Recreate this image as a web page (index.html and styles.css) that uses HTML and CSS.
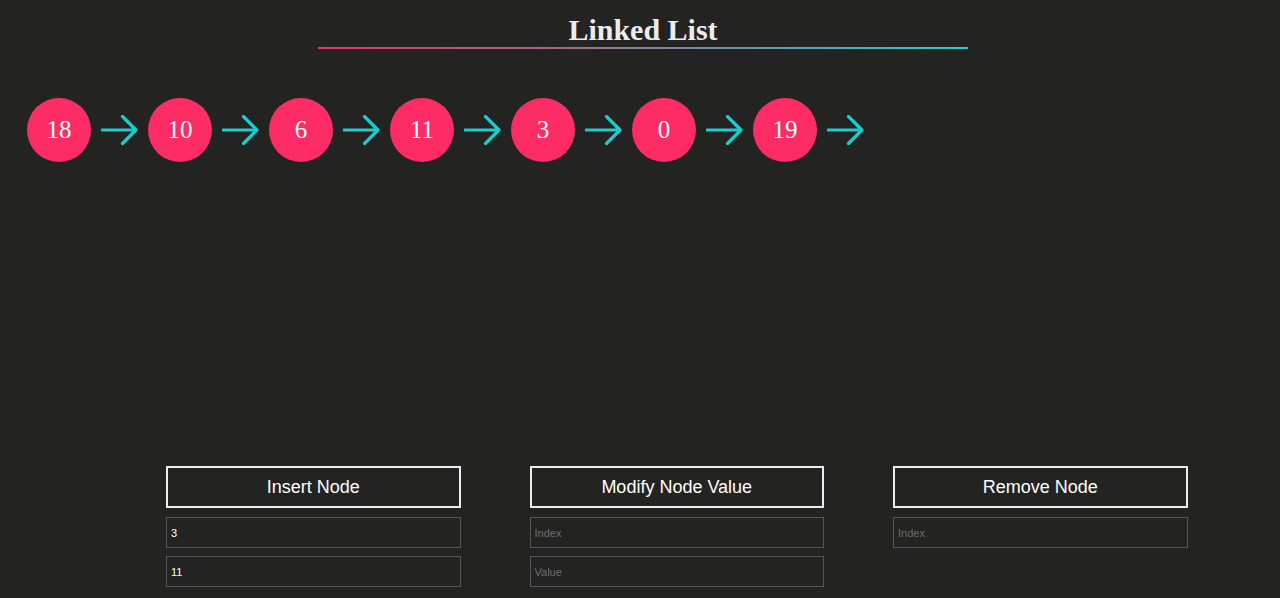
FILE: index.html
```html
<!DOCTYPE html>
<html>
<head>
<meta charset="utf-8">
<link rel="stylesheet" href="styles.css">
</head>
<body>
<header class="header">
  <h1 class="title">Linked List</h1>
  <div class="underline"></div>
</header>
<main class="list">
  <div class="item"><div class="node">18</div><svg class="arrow" viewBox="0 0 37 30"><path d="M1 15 H35 M21.5 1.5 L35 15 L21.5 28.5"/></svg></div>
  <div class="item"><div class="node">10</div><svg class="arrow" viewBox="0 0 37 30"><path d="M1 15 H35 M21.5 1.5 L35 15 L21.5 28.5"/></svg></div>
  <div class="item"><div class="node">6</div><svg class="arrow" viewBox="0 0 37 30"><path d="M1 15 H35 M21.5 1.5 L35 15 L21.5 28.5"/></svg></div>
  <div class="item"><div class="node">11</div><svg class="arrow" viewBox="0 0 37 30"><path d="M1 15 H35 M21.5 1.5 L35 15 L21.5 28.5"/></svg></div>
  <div class="item"><div class="node">3</div><svg class="arrow" viewBox="0 0 37 30"><path d="M1 15 H35 M21.5 1.5 L35 15 L21.5 28.5"/></svg></div>
  <div class="item"><div class="node">0</div><svg class="arrow" viewBox="0 0 37 30"><path d="M1 15 H35 M21.5 1.5 L35 15 L21.5 28.5"/></svg></div>
  <div class="item"><div class="node">19</div><svg class="arrow" viewBox="0 0 37 30"><path d="M1 15 H35 M21.5 1.5 L35 15 L21.5 28.5"/></svg></div>
</main>
<section class="controls">
  <div class="panel">
    <button class="btn">Insert Node</button>
    <input class="field" type="text" value="3" placeholder="Index">
    <input class="field" type="text" value="11" placeholder="Value">
  </div>
  <div class="panel">
    <button class="btn">Modify Node Value</button>
    <input class="field" type="text" placeholder="Index">
    <input class="field" type="text" placeholder="Value">
  </div>
  <div class="panel">
    <button class="btn">Remove Node</button>
    <input class="field" type="text" placeholder="Index">
  </div>
</section>
</body>
</html>
```
FILE: styles.css
```css
html, body {
  margin: 0;
  padding: 0;
  background: #232322;
  height: 598px;
  overflow: hidden;
}

body {
  font-family: "Liberation Sans", Arial, sans-serif;
  color: #fff;
}

.header {
  display: flex;
  flex-direction: column;
  align-items: center;
  padding-left: 6px;
  padding-top: 13px;
}

.title {
  margin: 0;
  font-family: "Liberation Serif", "Times New Roman", serif;
  font-weight: bold;
  font-size: 30px;
  line-height: 34px;
  color: #ececec;
}

.underline {
  width: 650px;
  height: 2px;
  margin-top: 0;
  background: linear-gradient(to right, #f02d62, #1ecfcf);
}

.list {
  display: flex;
  padding-left: 27px;
  margin-top: 49px;
  height: 64px;
}

.item {
  display: flex;
  align-items: center;
}

.node {
  width: 64px;
  height: 64px;
  border-radius: 50%;
  background: #fe2c64;
  display: flex;
  align-items: center;
  justify-content: center;
  font-family: "Liberation Serif", "Times New Roman", serif;
  font-size: 25px;
  color: #fff;
}

.arrow {
  width: 37px;
  height: 30px;
  margin: 0 10px 0 10px;
  fill: none;
  stroke: #1ccccb;
  stroke-width: 3.2;
  stroke-linecap: round;
  stroke-linejoin: round;
}

.controls {
  display: flex;
  gap: 69px;
  padding-left: 166px;
  margin-top: 304px;
}

.panel {
  width: 294.5px;
  display: flex;
  flex-direction: column;
}

.btn {
  height: 42px;
  box-sizing: border-box;
  background: #232322;
  border: 2px solid #ededed;
  color: #fff;
  font-family: "Liberation Sans", Arial, sans-serif;
  font-size: 18px;
  padding: 0;
  margin-bottom: 9px;
}

.field {
  height: 31px;
  box-sizing: border-box;
  background: #232322;
  border: 1px solid #555;
  color: #fff;
  font-family: "Liberation Sans", Arial, sans-serif;
  font-size: 11px;
  padding: 0 4px;
  margin-bottom: 8px;
  outline: none;
}

.field::placeholder {
  color: #6e6e6e;
}
```
